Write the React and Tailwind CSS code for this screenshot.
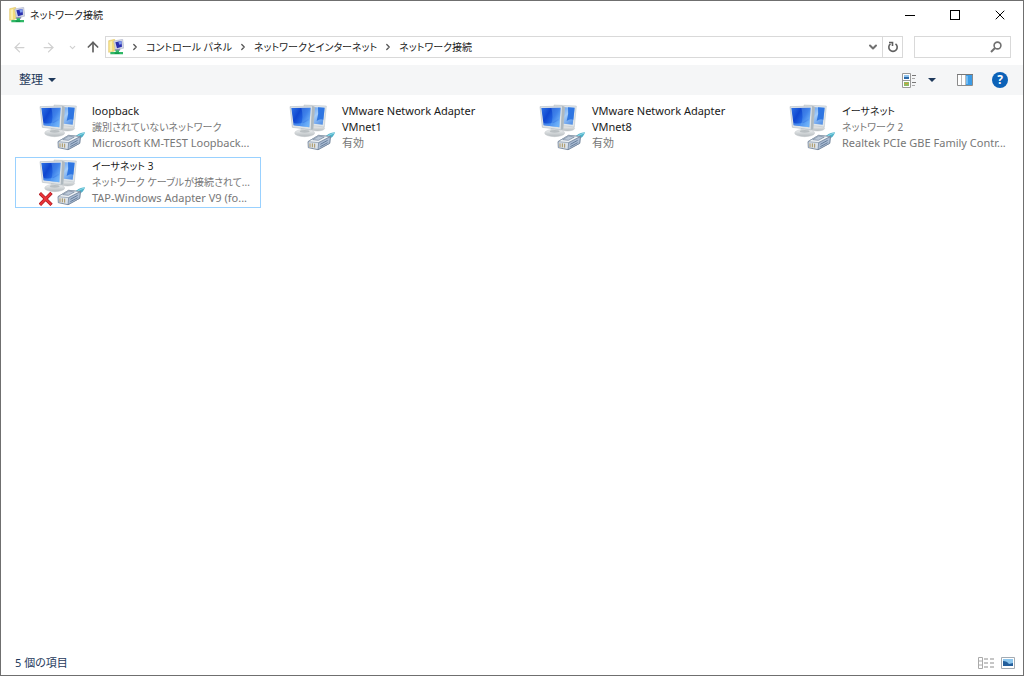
import { ArrowLeft, ArrowRight, ArrowUp, ChevronDown, ChevronRight, X } from "lucide-react"

const adapters = [
  {
    id: "loopback",
    name: "loopback",
    status: "識別されていないネットワーク",
    device: "Microsoft KM-TEST Loopback...",
  },
  {
    id: "vmnet1",
    name: "VMware Network Adapter VMnet1",
    status: "有効",
  },
  {
    id: "vmnet8",
    name: "VMware Network Adapter VMnet8",
    status: "有効",
  },
  {
    id: "ethernet",
    name: "イーサネット",
    status: "ネットワーク 2",
    device: "Realtek PCIe GBE Family Contr...",
  },
  {
    id: "ethernet3",
    name: "イーサネット 3",
    status: "ネットワーク ケーブルが接続されて...",
    device: "TAP-Windows Adapter V9 (fo...",
    selected: true,
    unplugged: true,
  },
]

const crumbs = ["コントロール パネル", "ネットワークとインターネット", "ネットワーク接続"]

// kana runs wide next to latin text, so it gets a smaller size
const textSize = (text) => (/[\u3040-\u30ff]/.test(text) ? "text-[10px] leading-4" : "text-[11px] leading-4")

const FolderIcon = () => (
  <svg viewBox="0 0 48 48" className="size-4 shrink-0" aria-hidden="true">
    <path d="M2 5 L20 1 V36 L2 40 Z" fill="#f3dc7c" stroke="#d9bd58" strokeWidth="1.5" />
    <path d="M5 8 L12 6 V37 L5 38 Z" fill="#fbefae" />
    <path d="M17 6 L44 1 L48 27 L23 34 Z" fill="#d3d6e4" stroke="#a9aec6" strokeWidth="1.5" />
    <path d="M22 10 L40 6 L42 23 L27 28 Z" fill="#2a2fae" />
    <path d="M31 8 L40 6 L41 15 L34 17 Z" fill="#7f9bee" />
    <path d="M20 31 L37 29 L36 35 L22 36 Z" fill="#8c92b4" />
    <path d="M23 34 H33 V39 H45 V46 H7 V39 H23 Z" fill="#2fb866" />
    <path d="M20 40 H34 V45 H20 Z" fill="#149a4c" />
  </svg>
)

const AdapterIcon = ({ unplugged }) => (
  <svg viewBox="9 6 138 144" className="h-12 w-[46px] shrink-0" aria-hidden="true">
    <defs>
      <linearGradient id="screen" x1="0" y1="0" x2="1" y2="0.6">
        <stop offset="0" stopColor="#2f74e6" />
        <stop offset="0.4" stopColor="#0f46cf" />
        <stop offset="0.7" stopColor="#2468e2" />
        <stop offset="1" stopColor="#6fb1f8" />
      </linearGradient>
      <linearGradient id="screenBack" x1="0" y1="0" x2="1" y2="1">
        <stop offset="0" stopColor="#3e86ec" />
        <stop offset="0.5" stopColor="#a5cdf9" />
        <stop offset="1" stopColor="#3f82e2" />
      </linearGradient>
      <linearGradient id="base" x1="0" y1="0" x2="0" y2="1">
        <stop offset="0" stopColor="#f1f3f4" />
        <stop offset="1" stopColor="#b4babd" />
      </linearGradient>
    </defs>
    {/* rear monitor */}
    <ellipse cx="94" cy="82" rx="22" ry="8" fill="url(#base)" stroke="#c4c9cc" strokeWidth="1.5" />
    <path d="M54 12 L121 15 L115 78 L60 72 Z" fill="#e0e5e8" stroke="#b6bec4" strokeWidth="1.5" />
    <path d="M60 17 L116 20 L110 71 L64 66 Z" fill="url(#screenBack)" />
    <path d="M96 19 L116 20 L112 56 Q102 52 92 60 Q99 40 96 19 Z" fill="#2f76e2" />
    {/* front monitor */}
    <path d="M46 76 L66 78 L68 92 L44 91 Z" fill="#d3d7d9" />
    <ellipse cx="56" cy="96" rx="30" ry="11" fill="url(#base)" stroke="#c0c5c8" strokeWidth="1.5" />
    <ellipse cx="56" cy="91" rx="15" ry="4" fill="#b9bfc2" />
    <path d="M12 17 L78 15 L86 18 L81 84 L74 86 L19 79 Z" fill="#dfe4e7" stroke="#a7b1b8" strokeWidth="1.5" />
    <path d="M78 15 L86 18 L81 84 L74 86 Z" fill="#aeb8be" />
    <path d="M16 21 L74 20 L70 79 L23 73 Z" fill="url(#screen)" />
    <path d="M46 21 L74 20 L72 52 Q58 56 44 74 Q54 48 46 21 Z" fill="#74b4fa" opacity="0.35" />
    <path d="M22 66 Q48 72 71 58 L70 79 L23 73 Z" fill="#6bb0fa" opacity="0.55" />
    {/* cable plug */}
    <path d="M117 108 Q126 96 147 94 Q144 108 127 116 Z" fill="#4fb0c8" />
    <path d="M122 107 Q132 100 145 96" fill="none" stroke="#8fdcea" strokeWidth="3" />
    <path d="M66 122 L98 103 L133 107 L131 127 L96 146 L67 140 Z" fill="#dce3eb" stroke="#6f8095" strokeWidth="2.5" />
    <path d="M66 122 L98 103 L133 107 L98 125 Z" fill="#eef2f6" stroke="#7f8fa3" strokeWidth="2" />
    <path d="M98 125 L133 107 L131 127 L96 146 Z" fill="#abbcd3" stroke="#6a7d96" strokeWidth="2" />
    <path d="M80 116 L98 105 L115 108 L97 118 Z" fill="#bac7d7" stroke="#74859b" strokeWidth="2" />
    <path d="M72 127 V138 M79 127 V139 M86 128 V140" stroke="#a9935f" strokeWidth="3" />
    <path d="M103 130 L125 118 M103 137 L125 125" stroke="#58718f" strokeWidth="2.5" />
    {unplugged && (
      <g strokeLinecap="square" fill="none">
        <path d="M15 115 L43 143 M43 114 L15 143" stroke="#a91319" strokeWidth="10" />
        <path d="M15 115 L43 143 M43 114 L15 143" stroke="#e8343a" strokeWidth="6.5" />
      </g>
    )}
  </svg>
)

const TitleBar = () => (
  <header className="flex h-7 items-center pr-px pl-2">
    <FolderIcon />
    <h1 className="ml-[5px] flex-1 text-[10px] leading-4">ネットワーク接続</h1>
    <button type="button" aria-label="最小化" className="flex h-full w-[45px] items-center justify-center">
      <span className="h-px w-[10px] bg-black" />
    </button>
    <button type="button" aria-label="最大化" className="flex h-full w-[45px] items-center justify-center">
      <span className="size-[10px] border border-black" />
    </button>
    <button type="button" aria-label="閉じる" className="flex h-full w-[45px] items-center justify-center">
      <X className="size-4 text-black" strokeWidth={1.5} />
    </button>
  </header>
)

const AddressBar = () => (
  <div className="flex h-9 items-center pr-3 pl-[11px]">
    <nav aria-label="移動" className="flex items-center text-[#d0d0d0]">
      <button type="button" aria-label="戻る" disabled className="flex w-[15px] justify-center">
        <ArrowLeft className="size-[15px]" strokeWidth={2} />
      </button>
      <button type="button" aria-label="進む" disabled className="ml-[14px] flex w-[15px] justify-center">
        <ArrowRight className="size-[15px]" strokeWidth={2} />
      </button>
      <button type="button" aria-label="最近表示した場所" disabled className="ml-[11px] flex w-[10px] justify-center">
        <ChevronDown className="size-[9px]" strokeWidth={3} />
      </button>
      <button type="button" aria-label="上へ" className="ml-2 flex w-4 justify-center text-[#606060]">
        <ArrowUp className="size-4" strokeWidth={2.5} />
      </button>
    </nav>
    <div className="ml-1 flex h-[22px] min-w-0 flex-1 items-center border border-[#d9d9d9] pl-[2px]">
      <FolderIcon />
      <ol className="flex min-w-0 flex-1 items-center overflow-hidden text-[10px] leading-4 whitespace-nowrap">
        {crumbs.map((crumb) => (
          <li key={crumb} className="flex items-center">
            <ChevronRight className="mx-[6px] size-[10px] text-[#555]" strokeWidth={3} />
            <a href="#" className="text-[#222]">{crumb}</a>
          </li>
        ))}
      </ol>
      <button type="button" aria-label="以前の場所" className="flex w-[18px] justify-center text-[#707070]">
        <ChevronDown className="size-3" strokeWidth={4} />
      </button>
      <button
        type="button"
        aria-label="更新"
        className="flex h-full w-5 items-center justify-center border-l border-[#d9d9d9] text-[#606060]"
      >
        <svg viewBox="0 0 12 12" className="size-3" fill="none" stroke="currentColor" strokeWidth="1.6">
          <path d="M8.5 2.8 A4.2 4.2 0 1 1 3.5 2.8" />
          <path d="M2 1.5 H5.5 V5" />
        </svg>
      </button>
    </div>
    <label className="ml-[11px] flex h-[22px] w-[97px] items-center border border-[#d9d9d9] pr-2">
      <input type="search" aria-label="検索" className="h-full min-w-0 flex-1 px-1 outline-none" />
      <svg viewBox="0 0 12 12" className="size-3 text-[#707070]" fill="none" stroke="currentColor" strokeWidth="1.6">
        <circle cx="7.5" cy="4.5" r="3.4" />
        <path d="M5 7 L1 11" strokeWidth="2" />
      </svg>
    </label>
  </div>
)

const CommandBar = () => (
  <div className="flex h-[30px] items-center bg-[#f5f6f7] pr-[15px] pl-[18px]">
    <button type="button" className="flex items-center gap-[5px] text-[12px] leading-4 text-[#1e395b]">
      整理
      <svg viewBox="0 0 8 4" className="h-1 w-2" fill="currentColor">
        <path d="M0 0 H8 L4 4 Z" />
      </svg>
    </button>
    <div className="ml-auto flex items-center text-[#1e395b]">
      <button type="button" aria-label="表示方法の変更">
        <svg viewBox="0 0 15 15" className="size-[15px]">
          <path d="M0.5 0.5 H8.5 V14.5 H0.5 Z M0.5 7.5 H8.5" fill="#fff" stroke="#9a9a9a" />
          <path d="M2 2 H7 V6 H2 Z" fill="#8fc3ee" />
          <path d="M2 4 H7 V6 H2 Z" fill="#2d69a8" />
          <path d="M2 9 H7 V13 H2 Z" fill="#8fba62" />
          <path d="M3 10 H6 V11 H3 Z" fill="#d49a3c" />
          <path d="M10 2.5 H14 M10 9.5 H14" stroke="#777" />
          <path d="M10 5.5 H13 M10 12.5 H13" stroke="#aaa" />
        </svg>
      </button>
      <button type="button" aria-label="その他のオプション" className="ml-[11px]">
        <svg viewBox="0 0 8 4" className="h-1 w-2" fill="currentColor">
          <path d="M0 0 H8 L4 4 Z" />
        </svg>
      </button>
      <button type="button" aria-label="プレビュー ウィンドウ" className="ml-[21px]">
        <svg viewBox="0 0 16 12" className="h-3 w-4">
          <path d="M0.5 0.5 H15.5 V11.5 H0.5 Z" fill="#fff" stroke="#8b8b8b" />
          <path d="M0 0 H16 V1 H0 Z" fill="#777" />
          <path d="M9 1 H15 V11 H9 Z" fill="#3b9be6" />
          <path d="M9 2 H11 V10 H9 Z" fill="#73bcf3" />
          <path d="M4.5 1 V11 M8.5 1 V11" stroke="#b9b9b9" />
        </svg>
      </button>
      <button
        type="button"
        aria-label="ヘルプ"
        className="ml-[19px] flex size-4 items-center justify-center rounded-full bg-[#0c62b8] text-[12px] leading-4 font-bold text-white"
      >
        ?
      </button>
    </div>
  </div>
)

const Adapter = ({ adapter }) => (
  <li>
    <button
      type="button"
      className={`flex w-full items-start border pb-px pl-[23px] text-left ${
        adapter.selected ? "border-[#99d1ff]" : "border-transparent"
      }`}
    >
      <AdapterIcon unplugged={adapter.unplugged} />
      <span className="ml-[7px] flex min-w-0 flex-1 flex-col text-[#1a1a1a]">
        <span className={textSize(adapter.name)}>{adapter.name}</span>
        <span className={`whitespace-nowrap text-[#777] ${textSize(adapter.status)}`}>{adapter.status}</span>
        {adapter.device && (
          <span className="text-[11px] leading-4 whitespace-nowrap text-[#777]">{adapter.device}</span>
        )}
      </span>
    </button>
  </li>
)

const StatusBar = () => (
  <footer className="flex h-6 items-center pr-2 pl-[14px] text-[#1e395b]">
    <p className="flex-1">{adapters.length} 個の項目</p>
    <button type="button" aria-label="詳細表示">
      <svg viewBox="0 0 17 12" className="h-3 w-[17px]">
        <path d="M0.5 0.5 H4.5 V11.5 H0.5 Z M0.5 4 H4.5 M0.5 8 H4.5" fill="#fff" stroke="#aaa" />
        <path d="M6 2 H10 M12 2 H16 M6 6 H10 M12 6 H16 M6 10 H10 M12 10 H16" stroke="#8d8d8d" />
      </svg>
    </button>
    <button type="button" aria-label="大きいアイコン" className="ml-[6px]">
      <svg viewBox="0 0 14 12" className="h-3 w-[14px]">
        <path d="M0.5 0.5 H13.5 V11.5 H0.5 Z" fill="#fff" stroke="#a3abb3" />
        <path d="M2 2 H12 V9 H2 Z" fill="#8cc6ee" />
        <path d="M2 4 Q6 4 8 7 L12 6 V9 H2 Z" fill="#245f9c" />
      </svg>
    </button>
  </footer>
)

export default function App() {
  return (
    <div className="flex min-h-screen flex-col border border-[#6f6f6f] bg-white font-['Noto_Sans','Noto_Sans_CJK_JP',sans-serif] text-[11px] leading-4 text-[#1a1a1a] [font-feature-settings:'palt']">
      <TitleBar />
      <AddressBar />
      <CommandBar />
      <main className="flex-1 pt-[7px] pl-[14px]">
        <ul className="grid grid-cols-[repeat(auto-fill,246px)] gap-x-1 gap-y-1">
          {adapters.map((adapter) => (
            <Adapter key={adapter.id} adapter={adapter} />
          ))}
        </ul>
      </main>
      <StatusBar />
    </div>
  )
}
